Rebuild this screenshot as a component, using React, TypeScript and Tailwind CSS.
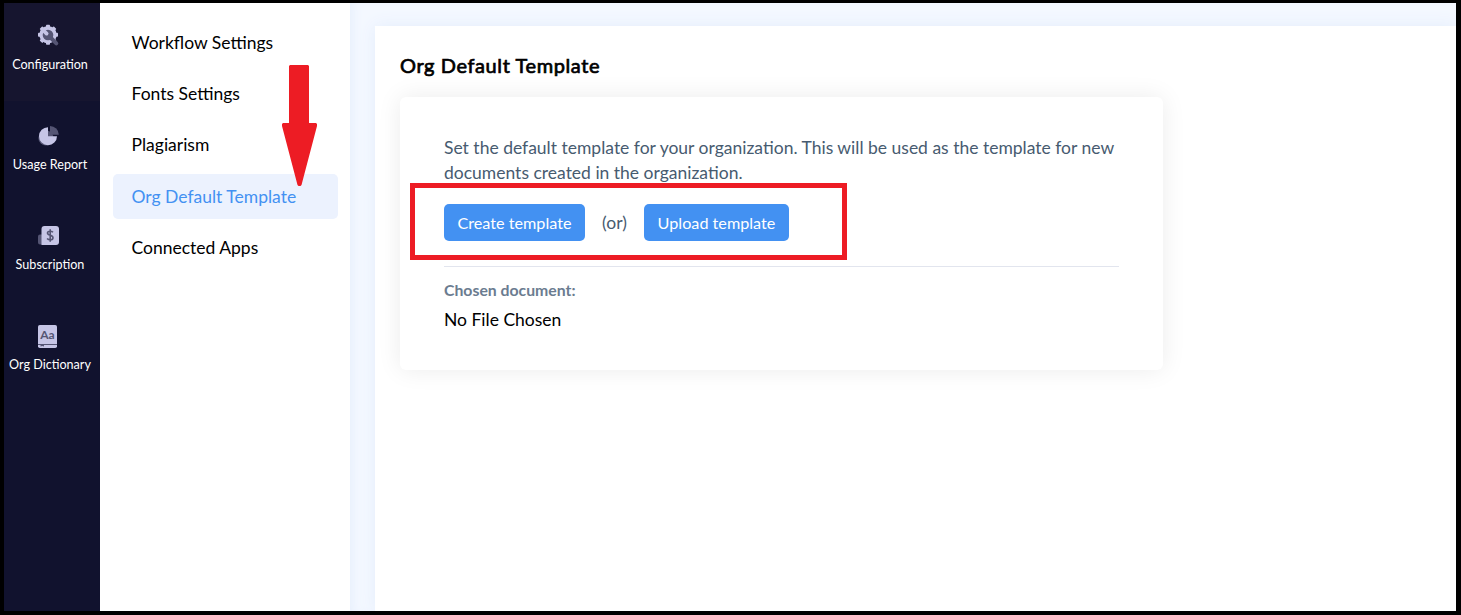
import type { ReactNode } from "react";

interface NavItem {
  label: string;
  icon: ReactNode;
}

const ConfigIcon = () => (
  <svg width="24" height="24" viewBox="0 0 24 24">
    <g fill="#c6c5e6">
      <circle cx="12" cy="11.7" r="8.7" />
      {[0, 45, 90, 135].map((deg) => (
        <rect key={deg} x="10" y="1.7" width="4" height="20" rx="0.8" transform={`rotate(${deg} 12 11.7)`} />
      ))}
    </g>
    <path d="M13 13 20.3 20.3" stroke="#555574" strokeWidth="4" strokeLinecap="round" />
    <circle cx="12" cy="12" r="5.3" fill="#555574" />
    <path d="M7 7 10.6 10.6" stroke="#c6c5e6" strokeWidth="3.8" strokeLinecap="round" />
  </svg>
);

const UsageIcon = () => (
  <svg width="24" height="24" viewBox="0 0 24 24">
    <circle cx="10" cy="14" r="7.6" fill="#555574" />
    <path d="M12 3.2v9h9a9 9 0 1 1-9-9z" fill="#c6c5e6" />
    <path d="M14 2a8.8 8.8 0 0 1 8.8 8.8H14z" fill="#555574" />
  </svg>
);

const SubscriptionIcon = () => (
  <svg width="24" height="24" viewBox="0 0 24 24">
    <path d="M2 12.5a2 2 0 0 1 2-2h3v10H4a2 2 0 0 1-2-2z" fill="#555574" />
    <path d="M8.5 2H20a3 3 0 0 1 3 3v13a3 3 0 0 1-3 3H5.5V5a3 3 0 0 1 3-3z" fill="#c6c5e6" />
    <path
      d="M17 8.3c-.8-.8-1.7-1.1-2.9-1.1-1.6 0-2.6.7-2.6 1.9 0 2.9 5.5 1.6 5.5 4.6 0 1.3-1.1 2.1-2.7 2.1-1.3 0-2.4-.4-3.2-1.3M14.2 5.3v12.4"
      fill="none"
      stroke="#555574"
      strokeWidth="1.6"
    />
  </svg>
);

const DictionaryIcon = () => (
  <svg width="24" height="24" viewBox="0 0 24 24">
    <rect x="2" y="1" width="19" height="23" rx="1.8" fill="#c6c5e6" />
    <path d="M2 20.5h19" stroke="#555574" strokeWidth="1" />
    <path d="M4.5 20.5h3.5v2l-1.7-.6-1.8.6z" fill="#555574" />
    <text x="11.5" y="14.8" textAnchor="middle" fontSize="12" fontWeight="700" fill="#555574">Aa</text>
  </svg>
);

const navItems: NavItem[] = [
  { label: "Configuration", icon: <ConfigIcon /> },
  { label: "Usage Report", icon: <UsageIcon /> },
  { label: "Subscription", icon: <SubscriptionIcon /> },
  { label: "Org Dictionary", icon: <DictionaryIcon /> },
];

const menuItems = ["Workflow Settings", "Fonts Settings", "Plagiarism", "Org Default Template", "Connected Apps"];

export default function App() {
  const active = "Org Default Template";

  return (
    <div className="relative flex h-[615px] w-[1461px] overflow-hidden border-t-3 border-r-5 border-b-4 border-l-4 border-black bg-white font-['Lato',sans-serif] text-black">
      {/* Sidebar */}
      <nav className="flex w-24 shrink-0 flex-col bg-[#11122e] pr-1">
        {navItems.map((item, i) => (
          <div
            key={item.label}
            className={`flex flex-col items-center ${i === 0 ? "-mr-1 h-[98px] bg-[#16152f] pt-5 pr-1" : "h-[100px] pt-[23px]"}`}
          >
            <div className="mr-1 h-6">{item.icon}</div>
            <div className={`whitespace-nowrap text-[12.6px] leading-5 text-white ${i === 0 ? "mt-2" : "mt-[7px]"}`}>
              {item.label}
            </div>
          </div>
        ))}
      </nav>

      {/* Settings menu */}
      <aside className="flex w-[250px] shrink-0 flex-col gap-[6px] pt-[18px] pr-3 pl-[13px]">
        {menuItems.map((label) => (
          <div
            key={label}
            className={`flex h-[45px] shrink-0 items-center rounded-[5px] pl-[18.5px] text-[17.5px] last:pt-[2px] ${label === active ? "bg-[#ecf2fe] pt-px text-[#4391f2]" : ""}`}
          >
            {label}
          </div>
        ))}
      </aside>

      {/* Content */}
      <main className="flex flex-1 overflow-hidden bg-[#f4f8ff] pt-[23px] pl-[25px] shadow-[inset_8px_0_12px_-6px_#e5eefc]">
        <section className="flex-1 bg-white pt-[26px] pl-[25px] shadow-[0_0_16px_#e3edfb]">
          <h1 className="text-xl leading-[26px] font-normal tracking-[0.6px] [-webkit-text-stroke:0.7px_#000]">
            Org Default Template
          </h1>
          <div className="mt-[19px] h-[273px] w-[763px] rounded-md bg-white px-11 pt-[38px] shadow-[0_0_24px_rgba(0,0,0,0.08)]">
            <p className="text-[17.5px] leading-[25px] whitespace-nowrap text-[#475b70]">
              Set the default template for your organization. This will be used as the template for new
              <br />
              documents created in the organization.
            </p>
            <div className="mt-[19px] flex h-[37px] items-center">
              <button className="h-[37px] w-[141px] rounded-[5px] bg-[#4391f2] pt-[2px] text-[16.2px] text-white">Create template</button>
              <span className="w-[59px] pt-[2px] text-center text-[17.5px] text-[#475b70]">(or)</span>
              <button className="h-[37px] w-[145px] rounded-[5px] bg-[#4391f2] pt-[2px] text-[16.2px] text-white">Upload template</button>
            </div>
            <hr className="mt-[25px] border-[#e2e5ee]" />
            <div className="mt-[12px] text-[15.8px] leading-[22px] font-bold text-[#6b7c90]">Chosen document:</div>
            <div className="mt-[6px] text-[17.5px] leading-[26px]">No File Chosen</div>
          </div>
        </section>
      </main>

      {/* Callouts */}
      <svg className="absolute top-[62px] left-[278px]" width="36" height="122" viewBox="0 0 36 122">
        <path
          d="M8 0h18l1 1v57h7l1 1v2l-15.500 59-1 1h-2l-1-1L0 61v-2l1-1h6V1z"
          fill="#ed1c24"
        />
      </svg>
      <div className="absolute top-[180px] left-[406px] h-[77px] w-[437px] border-5 border-[#ed1c24]" />
    </div>
  );
}
